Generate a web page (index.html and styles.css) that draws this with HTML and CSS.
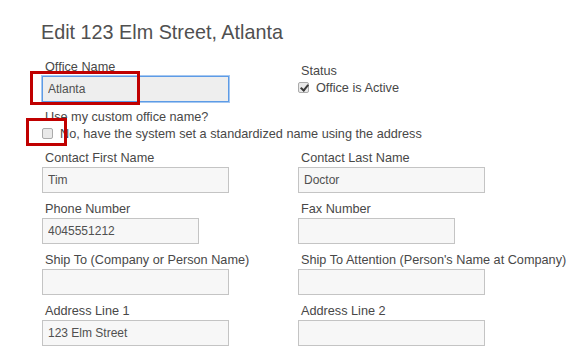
FILE: index.html
```html
<!DOCTYPE html>
<html lang="en">
<head>
  <meta charset="UTF-8">
  <title>Edit Office</title>
  <meta name="viewport" content="width=device-width, initial-scale=1.0">
  <link rel="stylesheet" href="styles.css">
</head>
<body>
  <div class="page">
    <h1 class="title">Edit 123 Elm Street, Atlanta</h1>

    <div class="row">
      <div class="field">
        <label class="label" for="office-name">Office Name</label>
        <input class="input focused" id="office-name" type="text" value="Atlanta">
      </div>
      <div class="field status">
        <div class="label">Status</div>
        <label class="check"><input type="checkbox" checked> Office is Active</label>
      </div>
    </div>

    <div class="custom">
      <div class="label">Use my custom office name?</div>
      <label class="check"><input type="checkbox"> No, have the system set a standardized name using the address</label>
    </div>

    <div class="grid">
      <div class="field">
        <label class="label">Contact First Name</label>
        <input class="input" type="text" value="Tim">
      </div>
      <div class="field">
        <label class="label">Contact Last Name</label>
        <input class="input" type="text" value="Doctor">
      </div>
      <div class="field">
        <label class="label">Phone Number</label>
        <input class="input short" type="text" value="4045551212">
      </div>
      <div class="field">
        <label class="label">Fax Number</label>
        <input class="input short" type="text" value="">
      </div>
      <div class="field">
        <label class="label">Ship To (Company or Person Name)</label>
        <input class="input" type="text" value="">
      </div>
      <div class="field">
        <label class="label">Ship To Attention (Person's Name at Company)</label>
        <input class="input" type="text" value="">
      </div>
      <div class="field">
        <label class="label">Address Line 1</label>
        <input class="input" type="text" value="123 Elm Street">
      </div>
      <div class="field">
        <label class="label">Address Line 2</label>
        <input class="input" type="text" value="">
      </div>
    </div>

    <!-- review markers drawn over the form -->
    <div class="marker marker-name"></div>
    <div class="marker marker-check"></div>
  </div>
</body>
</html>
```

FILE: styles.css
```css
* { margin: 0; padding: 0; box-sizing: border-box; }
body {
  background: #fff;
  font-family: 'Liberation Sans', Arial, sans-serif;
  font-size: 12.7px;
  color: #484848;
  overflow: hidden;
}
.page {
  position: relative;
  padding: 20px 0 0 42px;
  height: 350px;
}
.title {
  font-size: 19.8px;
  font-weight: normal;
  line-height: 24px;
  color: #505050;
  margin: 0 0 15px -1px;
}
.row, .grid {
  display: grid;
  grid-template-columns: 256px 256px;
}
.grid {
  row-gap: 8px;
}
.label {
  display: block;
  line-height: 16px;
  margin-bottom: 1px;
  padding-left: 3px;
  white-space: nowrap;
}
.input {
  display: block;
  width: 187px;
  height: 26px;
  border: 1px solid #c4c4c4;
  background: #f7f7f7;
  padding: 0 5px;
  font-family: 'Liberation Sans', Arial, sans-serif;
  font-size: 12px;
  color: #505050;
  outline: none;
}
.input.short {
  width: 157px;
}
.input.focused {
  background: #eee;
  border-color: #5d9be6;
  box-shadow: 0 0 0 1px rgba(93, 155, 230, 0.55);
}
.status {
  padding-top: 4px;
}
.check {
  display: flex;
  align-items: center;
  gap: 7px;
  line-height: 16px;
  white-space: nowrap;
}
.check input {
  appearance: none;
  -webkit-appearance: none;
  width: 11px;
  height: 11px;
  border: 1px solid #ababab;
  border-radius: 2px;
  background: #e9e9e9;
  position: relative;
  flex: none;
  margin-top: -2px;
}
.check input:checked::after {
  content: "";
  position: absolute;
  left: 3px;
  top: 0;
  width: 3px;
  height: 6px;
  border: solid #3a3a3a;
  border-width: 0 2px 2px 0;
  transform: rotate(40deg);
}
.custom {
  margin: 7px 0 8px;
}
.marker {
  position: absolute;
  border: 3px solid #c00000;
}
.marker-name {
  left: 30px;
  top: 71px;
  width: 110px;
  height: 34px;
}
.marker-check {
  left: 26px;
  top: 118px;
  width: 41px;
  height: 28px;
}
```
